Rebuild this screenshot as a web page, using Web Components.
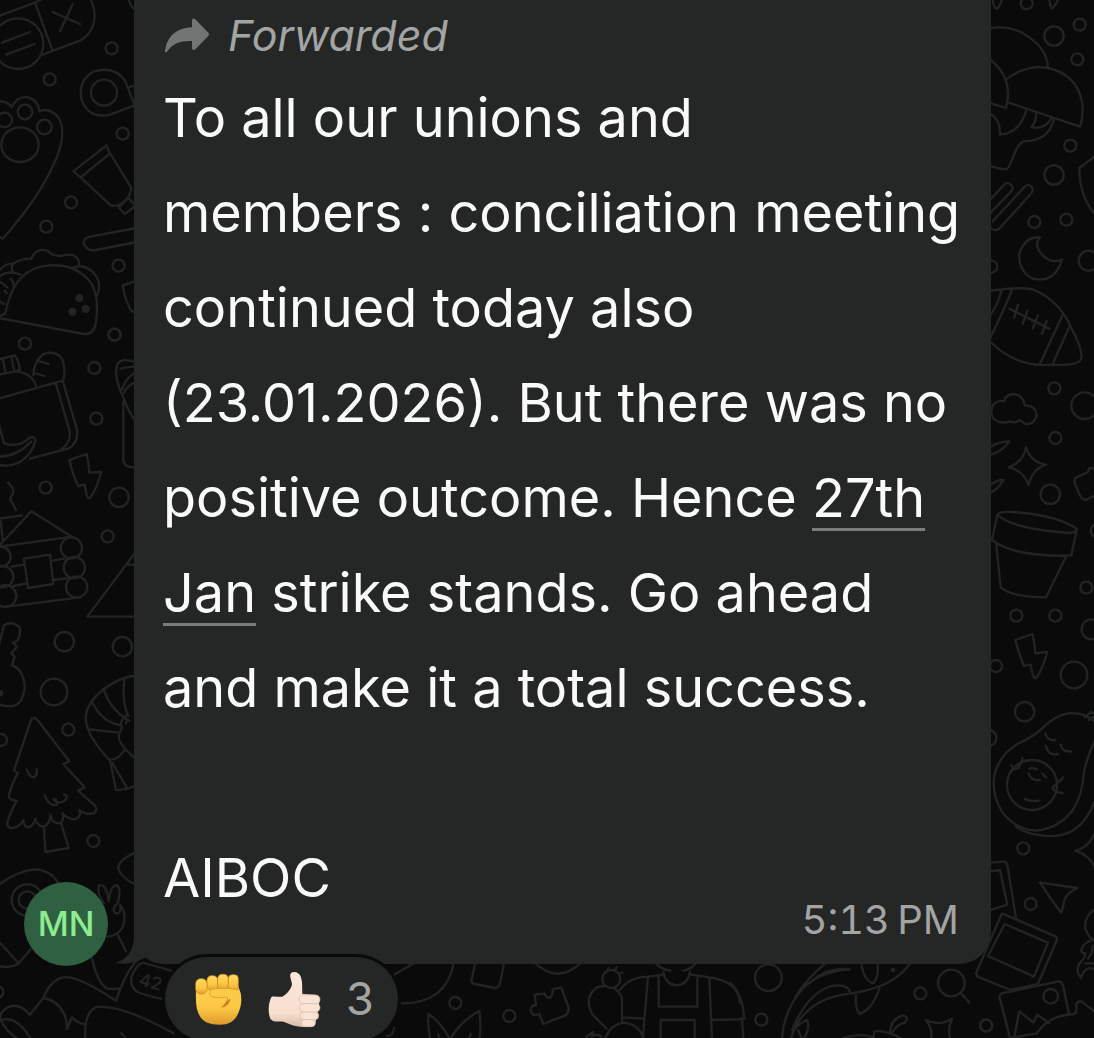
<!DOCTYPE html>
<html lang="en">
<head>
<meta charset="utf-8">
<meta name="viewport" content="width=device-width, initial-scale=1">
<title>Chat</title>
<style>
  body {
    margin: 0;
    background: #0a0a0a;
    color: #fafafa;
    font-family: Inter, "Liberation Sans", sans-serif;
    overflow: hidden;
  }
</style>
</head>
<body>
<chat-thread>
  <chat-message>
    <user-avatar slot="avatar">MN</user-avatar>
    <forwarded-label slot="label">Forwarded</forwarded-label>
    <message-text>To all our unions and<br>members : conciliation meeting<br>continued today also<br>(23.01.2026). But there was no<br>positive outcome. Hence <a href="#date">27th<br>Jan</a> strike stands. Go ahead<br>and make it a total success.<br><br>AIBOC</message-text>
    <time slot="time" datetime="17:13">5:13&#8201;PM</time>
    <reaction-pill slot="reactions" count="3"></reaction-pill>
  </chat-message>
</chat-thread>

<script>
class DoodleWallpaper extends HTMLElement {
  constructor() {
    super();
    this.attachShadow({mode: 'open'});
    this.render();
  }

  // each nested svg is one patch of the pattern, drawn at three units per pixel
  render() {
    this.shadowRoot.innerHTML = `
      <style>
        :host {
          display: block;
          overflow: hidden;
        }
        svg {
          display: block;
          overflow: visible;
          fill: none;
          stroke: #222323;
          stroke-width: 7;
          stroke-linecap: round;
          stroke-linejoin: round;
        }
        .dot { fill: #222323; stroke: none; }
        .over { fill: #0a0a0a; }
        text { fill: #222323; stroke: none; font-size: 54px; font-weight: 600; }
      </style>
      <svg width="1094" height="1038" viewBox="0 0 1094 1038" aria-hidden="true">
        <svg x="0" y="0" width="140" height="350" viewBox="0 0 420 1050">
          <path d="M-10 50L105 8L130-5M105 8L157 150M128 164L240 122Q282 98 284 48Q283 18 270-6"/>
          <path d="M158 36L240 72M218 12L180 94"/>
          <circle class="over" cx="54" cy="131" r="76"/>
          <path d="M6 128L90 96M18 164L104 132"/>
          <path d="M386-4Q390 18 404 28"/>
          <circle cx="335" cy="145" r="18"/><circle cx="149" cy="238" r="18"/>
          <circle cx="368" cy="401" r="18"/><circle cx="213" cy="607" r="18"/>
          <circle cx="139" cy="680" r="18"/><circle cx="356" cy="797" r="18"/>
          <circle cx="343" cy="1004" r="18"/><circle cx="75" cy="1031" r="18"/>
          <circle cx="312" cy="278" r="39"/>
          <path d="M404 316L330 344Q270 358 246 304Q230 244 282 214Q345 196 376 244L404 316M384 262L404 256"/>
          <path d="M-6 304Q22 302 36 322Q50 288 84 292Q116 302 118 334Q150 320 176 354Q202 400 166 482Q120 590 8 716L-5 708"/>
          <circle cx="75" cy="336" r="22"/><circle cx="14" cy="360" r="22"/><circle cx="133" cy="381" r="22"/>
          <ellipse cx="60" cy="434" rx="56" ry="52"/>
          <path d="M220 514L319 436L328 456L394 564Q392 590 372 604Q354 622 332 616L242 532ZM242 532L328 462"/>
          <path d="M356 622L386 594L406 618L374 642Z"/>
          <path d="M410 684L270 710Q246 716 252 732Q262 754 288 750L410 726"/>
          <path d="M404 844L368 856Q372 888 388 922Q392 934 404 936"/>
          <path d="M-4 954L252 1002Q282 1006 288 966Q298 890 274 850Q232 792 150 796Q78 800 42 862Q24 898 16 940L-4 950"/>
          <path d="M-4 814Q14 790 38 792Q60 776 94 776Q108 742 142 752Q164 774 190 766Q232 756 238 792M38 792Q32 808 40 818M-4 832Q22 808 62 824"/>
          <path d="M216 804Q252 788 282 820Q308 850 290 888M0 846Q12 852 22 862M32 836Q44 850 40 858M14 872L20 880M-2 904L12 912"/>
          <circle class="dot" cx="238" cy="894" r="12"/><circle class="dot" cx="217" cy="935" r="12"/><circle class="dot" cx="257" cy="927" r="12"/>
        </svg>

        <svg x="0" y="340" width="140" height="350" viewBox="0 0 420 1050">
          <circle cx="283" cy="84" r="18"/><circle cx="289" cy="236" r="18"/>
          <circle cx="137" cy="443" r="18"/><circle cx="323" cy="589" r="18"/>
          <circle cx="357" cy="472" r="29"/><circle cx="193" cy="905" r="29"/><circle cx="367" cy="920" r="29"/>
          <circle cx="344" cy="-16" r="18"/>
          <path d="M-4 176L188 122L230 266Q238 308 204 326L90 356M168 132L208 270Q216 306 182 330"/>
          <path d="M108 138Q98 100 48 94L-4 104M-4 58L44 46Q54 54 60 88L48 94M8 56L16 96M34 50L42 90"/>
          <path d="M100 106Q100 66 130 42Q166 30 186 56Q198 86 190 120M118 64L146 72M106 100L134 108"/>
          <path d="M-4 250L12 310Q58 324 88 294Q104 284 106 302Q98 340 60 366Q30 382-4 374M-4 350Q50 350 94 304"/>
          <path d="M208 360L260 342Q266 370 268 398L304 396Q290 446 272 472Q266 480 260 466L254 434L234 438Q216 400 208 360Z"/>
          <path d="M404 66Q360 50 350 78Q342 116 370 172Q386 216 404 240M370 186V356Q370 384 404 382M404 80Q382 80 362 86M404 98Q376 116 366 148M404 128Q382 136 372 158"/>
          <path d="M24 428Q46 448 38 462Q24 478 38 490L48 510"/>
          <path d="M0 614L94 514L216 590L0 620M-4 536L66 526M2 544L8 600"/>
          <circle cx="214" cy="624" r="32"/><circle cx="223" cy="683" r="32"/><circle cx="230" cy="741" r="32"/>
          <circle cx="2" cy="650" r="30"/><circle cx="8" cy="710" r="32"/><circle cx="16" cy="768" r="33"/>
          <path d="M72 656L150 644L160 732L84 744ZM158 662L192 656M162 720L204 714M34 680L74 674M40 738L82 730M20 800L240 772"/>
          <path d="M404 640L262 830H404M382 674H404"/>
          <path d="M-4 920Q4 884 12 856Q32 842 58 860Q64 876 54 900L38 910Q56 916 46 926L34 940L44 950L36 976Q72 990 74 1040Q70 1090 40 1098Q20 1100-4 1094"/>
          <circle cx="162" cy="1056" r="40"/>
        </svg>

        <svg x="0" y="680" width="170" height="358" viewBox="0 0 510 1074">
          <circle class="dot" cx="0" cy="40" r="10"/>
          <circle cx="205" cy="149" r="18"/><circle cx="3" cy="180" r="18"/><circle cx="280" cy="483" r="18"/><circle cx="-8" cy="936" r="18"/>
          <path d="M94 118Q102 108 114 122L208 244L190 252L254 322L234 332L284 376Q298 398 272 402Q246 400 238 390Q246 412 224 418Q200 416 188 400Q194 430 172 430Q152 424 152 404Q150 438 126 440Q108 432 106 416Q98 444 82 442Q70 434 70 420Q56 446 32 444Q16 440 26 414Q36 388 50 362Q30 362 26 350Q34 314 54 278Q40 276 44 264Z"/>
          <path d="M80 268Q88 292 102 292Q114 284 110 266M134 346Q146 378 170 376Q172 352 160 358Q174 374 194 362Q208 348 192 344"/>
          <path d="M132 442L136 516L206 504L184 432"/>
          <path d="M404-12Q350-8 292 44Q252 86 258 124Q264 170 326 238Q350 244 376 208Q350 178 358 160Q370 140 362 134Q366 108 386 106"/>
          <path d="M278 70Q308 128 362 136M310 26Q332 92 388 122M374-6Q364 58 384 106M270 148L356 158M330 240L348 330Q380 330 404 318M338 250L380 322M376 208L404 234M370 112Q384 114 378 130"/>
          <path d="M404 518Q358 540 354 562Q362 594 404 612"/>
          <path d="M-4 614Q54 572 104 568Q152 570 174 608M-4 784L56 850L92 808M56 850Q34 866-4 858"/>
          <circle cx="82" cy="660" r="47"/><circle cx="82" cy="660" r="26"/>
          <path d="M312 670Q288 636 298 616Q320 610 326 664Q332 614 350 616Q366 624 352 672Q336 680 344 698Q366 708 360 674Q382 700 368 742Q350 770 320 770M352 762L378 814M276 834Q290 902 318 924Q334 930 362 924M404 848Q374 884 348 962Q230 884 188 892Q150 902 130 954L90 1004Q54 964 20 984Q-4 1000 2 1020Q22 1060 60 1080M132 954Q172 962 192 1000Q202 1020 200 1048L216 1012Q230 1028 250 1032M4 1020Q50 1006 92 1076M256 1080Q250 996 292 980Q370 976 520 1060"/>
          <path d="M520 874L428 848Q408 854 394 892Q390 920 412 936Q452 952 510 960"/>
          <text transform="translate(413 914) rotate(16)">42</text>
          <path d="M404 848Q424 826 452 830M364 1060L374 1070"/>
        </svg>

        <svg x="984" y="0" width="110" height="350" viewBox="0 0 330 1050">
          <circle cx="128" cy="10" r="18"/><circle cx="287" cy="74" r="18"/><circle cx="280" cy="178" r="18"/>
          <circle cx="259" cy="437" r="18"/><circle cx="151" cy="666" r="18"/><circle cx="247" cy="659" r="18"/><circle cx="22" cy="800" r="18"/>
          <circle cx="210" cy="108" r="29"/><circle cx="210" cy="525" r="29"/><circle cx="314" cy="782" r="30"/>
          <path d="M26 0Q30 28 40 26Q50 16 54-4M196-4Q198 26 206 24Q216 14 224-4"/>
          <path d="M20 84Q86 74 136 112Q190 150 192 204M66 238Q128 192 192 204Q276 222 294 304Q300 344 288 380L74 308M20 180Q74 222 72 290L66 324L20 310"/>
          <path d="M20 342Q50 360 48 404Q108 400 128 328M156 338Q158 364 142 382Q184 390 204 352M210 358Q194 424 120 424Q102 430 90 464Q74 508 66 508Q44 508 20 498"/>
          <path d="M20 598L62 552Q74 544 84 558Q88 568 80 576L20 638M26 664L122 560Q138 548 146 566Q148 574 138 584L48 684Q32 696 20 684"/>
          <path d="M168 712Q124 708 106 760Q102 812 146 836Q214 850 234 778Q204 792 178 768Q146 736 168 712Z"/>
          <path d="M334 468L286 504Q286 590 334 644"/>
          <path d="M20 872Q104 860 146 868Q226 900 262 984Q304 1062 288 1082Q276 1098 200 1094Q100 1104 20 1026M52 872Q42 912 20 944M84 870Q60 928 20 1012M236 944L168 1092M256 980L206 1092"/>
          <path d="M76 926L196 986M102 914L90 954M130 932L116 972M162 946L146 986M188 962L174 1002"/>
        </svg>

        <svg x="984" y="340" width="110" height="350" viewBox="0 0 330 1050">
          <circle cx="211" cy="145" r="18"/><circle cx="214" cy="294" r="18"/><circle cx="307" cy="743" r="18"/>
          <circle cx="97" cy="827" r="18"/><circle cx="214" cy="827" r="18"/><circle cx="36" cy="978" r="18"/>
          <circle cx="199" cy="463" r="29"/><circle cx="302" cy="197" r="40"/><circle cx="323" cy="868" r="30"/><circle cx="270" cy="1005" r="40"/><circle cx="340" cy="572" r="20"/>
          <path d="M60 184Q64 164 90 162Q118 166 122 196Q154 194 158 226Q150 256 124 252L106 240Q94 252 78 244Q48 254 28 236Q14 212 32 190Q44 180 60 184Z"/>
          <path d="M20 320Q46 304 76 304Q54 334 20 344M20 434Q40 420 58 420Q46 444 20 458"/>
          <path d="M126 322Q140 366 186 374Q144 388 134 436Q118 390 74 382Q118 366 126 322Z"/>
          <path d="M334 386L316 384L312 396L274 414Q268 430 278 442Q290 480 304 480L334 466"/>
          <path d="M40 524Q46 514 88 516Q220 526 278 566Q280 584 222 576Q78 562 40 524ZM40 524L24 600Q70 634 148 642Q204 650 262 646L278 570M36 608L50 742Q86 772 186 772L246 650"/>
          <path d="M94 900L146 882Q152 910 154 940L190 936Q176 986 158 1012Q152 1020 146 1004L140 974L120 978Q104 940 94 900Z"/>
        </svg>

        <svg x="984" y="680" width="110" height="358" viewBox="0 0 330 1074">
          <circle cx="122" cy="95" r="29"/><circle cx="12" cy="174" r="25"/><circle cx="118" cy="505" r="18"/><circle cx="140" cy="672" r="18"/><circle cx="6" cy="1036" r="18"/>
          <path d="M334 126Q300 96 252 100Q216 106 180 140Q150 170 100 192Q46 226 32 282Q20 340 56 398Q98 450 156 452Q222 446 264 394Q296 346 300 276Q312 220 334 180M96 440Q140 470 208 468Q294 466 334 360M302 112L320 96L334 102M314 120L330 110"/>
          <circle cx="144" cy="315" r="75"/>
          <path d="M184 160Q190 184 214 180M230 194Q236 218 262 214M186 198Q192 228 222 222M136 266Q146 260 158 268M134 280Q140 304 168 300M174 280L186 292M122 356Q140 366 166 362M82 256L90 268L104 264L116 234M238 292Q218 312 206 322Q204 334 236 340"/>
          <path d="M334 456Q312 506 274 512Q318 526 334 566"/>
          <path d="M168 608L280 624Q252 638 242 656Q238 682 232 698Q200 658 168 608Z"/>
          <path d="M20 548L62 544L70 554L96 716M20 574L48 570L70 674L20 690"/>
          <path class="over" d="M54 700L216 770Q222 776 216 786L162 912L80 930L-20 890L-24 880Z"/>
          <path d="M62 732L192 788L150 890L12 828Z"/>
          <path d="M78 1074L46 950Q50 938 64 938L224 904Q234 904 238 920L254 998M90 1074L106 994L148 1028L160 1004L196 1030M78 1074L158 1060Q194 1006 270 1002Q280 1000 276 974Q280 962 292 964L334 996"/>
          <circle cx="200" cy="949" r="22"/>
          <path d="M334 686Q300 708 304 746Q318 782 334 780M324 780Q296 790 292 810Q294 824 304 818Q302 838 290 846Q278 858 282 880L292 894Q296 870 316 864L334 868M312 836Q326 820 326 798M304 850H330"/>
        </svg>

        <svg x="380" y="940" width="360" height="98" viewBox="0 0 1080 294">
          <circle cx="226" cy="189" r="18"/><circle cx="388" cy="228" r="18"/>
          <path d="M40 106L104 68M222 64Q202 192 60 190M286 68L274 122Q276 130 284 132L346 144Q358 142 360 130L372 70M464 68Q532 134 604 68"/>
          <path d="M150 294Q142 250 146 222Q190 254 210 300Q234 250 298 212Q304 256 298 300M174 282L178 294M272 282L268 294M20 288Q40 290 42 264"/>
          <path d="M464 164L494 160Q500 178 512 172Q520 158 518 148L544 142L566 204Q566 220 556 226L490 252L478 222Q454 232 452 208Q456 194 468 196Z"/>
          <path d="M680 266L636 222Q610 170 652 142Q700 124 726 172V246M674 300Q690 252 734 248Q780 254 792 300"/>
          <circle class="over" cx="694" cy="117" r="27"/>
          <path d="M682 92L686 84M704 90L710 82M718 100L728 98M620 290L640 276L636 290Q650 278 664 290"/>
          <path d="M720 150Q746 112 804 110L852 104M934 104L988 112Q1076 124 1080 190M804 110L788 300M988 112L996 300M728 232L790 236M996 240L1080 238M836 108V200H952V108M842 300V240H944V300M826 68Q842 88 872 92M948 68Q938 86 910 92M850 96Q856 134 892 136Q924 132 930 96"/>
        </svg>

        <svg x="730" y="880" width="364" height="158" viewBox="0 0 1092 474">
          <circle cx="115" cy="293" r="40"/><circle cx="94" cy="419" r="18"/><circle cx="571" cy="340" r="18"/><circle cx="769" cy="437" r="18"/><circle cx="664" cy="309" r="40"/>
          <circle class="dot" cx="489" cy="270" r="7"/>
          <path d="M0 308Q40 344 42 416M30 416H44M36 418L40 474M692 338L718 368"/>
          <path d="M156 474Q162 400 204 344Q250 276 360 268Q296 260 250 300M286 250Q228 298 196 350M184 474Q218 356 364 340Q492 322 540 250M186 450Q232 340 304 318Q356 310 362 340M394 250Q400 300 430 310Q448 288 442 250M378 346Q374 388 390 402Q428 386 448 326M184 474Q190 436 232 420Q240 450 222 474M204 450L214 474"/>
          <path d="M340 474Q390 458 430 472L434 454Q466 450 512 474M480 458Q480 420 516 406Q540 410 524 428Q500 434 486 458M588 420Q626 440 666 416Q652 446 660 474M588 420Q608 446 604 474"/>
        </svg>
      </svg>
    `;
  }
}

class ChatThread extends HTMLElement {
  constructor() {
    super();
    this.attachShadow({mode: 'open'});
    this.render();
  }

  render() {
    this.shadowRoot.innerHTML = `
      <style>
        :host {
          display: grid;
          height: 100vh;
          overflow: hidden;
        }
        doodle-wallpaper, main {
          grid-area: 1 / 1;
          min-width: 0;
          min-height: 0;
        }
        main { position: relative; }
      </style>
      <doodle-wallpaper></doodle-wallpaper>
      <main><slot></slot></main>
    `;
  }
}

class ChatMessage extends HTMLElement {
  constructor() {
    super();
    this.attachShadow({mode: 'open'});
    this.render();
  }

  render() {
    this.shadowRoot.innerHTML = `
      <style>
        :host {
          display: grid;
          grid-template-columns: 110px minmax(0, 1fr);
          column-gap: 24px;
          padding-right: 103px;
        }
        .avatar {
          align-self: end;
          justify-self: end;
          padding-right: 2px;
          height: 82px;
        }
        .bubble {
          position: relative;
          display: flex;
          flex-direction: column;
          padding: 10px 32px 20px 29px;
          background: #252726;
          border-radius: 0 0 32px 32px;
        }
        .tail {
          position: absolute;
          left: -19px;
          bottom: 0;
          fill: #252726;
        }
        .time {
          align-self: flex-end;
          margin-top: -29px;
          color: #a3a4a4;
          font-size: 40px;
          line-height: 48px;
          font-variant-numeric: tabular-nums;
        }
        .reactions {
          grid-column: 2;
          position: relative;
          margin: -7px 0 0 31px;
        }
      </style>
      <div class="avatar"><slot name="avatar"></slot></div>
      <article class="bubble">
        <svg class="tail" width="50" height="40" viewBox="0 0 50 40" aria-hidden="true">
          <path d="M19 0V12C19 26 12 36 0 39C11 41 22 39 30 33C36 38 42 40 50 40V0Z"/>
        </svg>
        <slot name="label"></slot>
        <slot></slot>
        <div class="time"><slot name="time"></slot></div>
      </article>
      <div class="reactions"><slot name="reactions"></slot></div>
    `;
  }
}

class UserAvatar extends HTMLElement {
  constructor() {
    super();
    this.attachShadow({mode: 'open'});
    this.render();
  }

  render() {
    this.shadowRoot.innerHTML = `
      <style>
        :host {
          display: grid;
          place-items: center;
          width: 84px;
          height: 84px;
          border-radius: 50%;
          background: #2f6041;
          color: #8eeb90;
          font-size: 34px;
          font-weight: 500;
          line-height: 42px;
        }
      </style>
      <slot></slot>
    `;
  }
}

class ForwardedLabel extends HTMLElement {
  constructor() {
    super();
    this.attachShadow({mode: 'open'});
    this.render();
  }

  render() {
    this.shadowRoot.innerHTML = `
      <style>
        :host {
          display: flex;
          align-items: center;
          gap: 18px;
          box-sizing: border-box;
          height: 60px;
          padding: 0 0 10px 2px;
          color: #a3a4a4;
          font-size: 43px;
          line-height: 50px;
          font-style: italic;
        }
        svg { fill: #737474; }
      </style>
      <svg width="45" height="35" viewBox="0 0 135 105" aria-hidden="true">
        <path d="M2 103C-1 103 0 96 1 92C10 48 40 30 81 28V8C81 0 87 0 91 4L130 44Q134 49 130 54L92 93C88 98 81 97 81 90V69C46 68 24 76 7 100Q5 103 2 103Z"/>
      </svg>
      <span><slot></slot></span>
    `;
  }
}

class MessageText extends HTMLElement {
  constructor() {
    super();
    this.attachShadow({mode: 'open'});
    this.render();
  }

  render() {
    this.shadowRoot.innerHTML = `
      <style>
        :host {
          display: block;
          font-size: 54px;
          line-height: 95px;
          white-space: nowrap;
        }
        ::slotted(a) {
          color: inherit;
          text-decoration: underline 3px #7c7d7d;
          text-decoration-skip-ink: none;
          text-underline-offset: 11px;
        }
      </style>
      <slot></slot>
    `;
  }
}

class ReactionPill extends HTMLElement {
  constructor() {
    super();
    this.attachShadow({mode: 'open'});
    this.render();
  }

  render() {
    this.shadowRoot.innerHTML = `
      <style>
        :host { display: block; }
        button {
          display: flex;
          align-items: center;
          gap: 24px;
          height: 84px;
          padding: 0 24px 0 28px;
          border: none;
          border-radius: 42px;
          background: #252726;
          box-shadow: 0 0 0 3px #0a0a0a;
          color: #a3a4a4;
          font: inherit;
          font-size: 45px;
          line-height: 54px;
        }
      </style>
      <button type="button" aria-label="${this.getAttribute('count')} reactions">
        <svg width="50" height="54" viewBox="16 17 150 162" aria-hidden="true">
          <defs>
            <linearGradient id="gold" x1="0" y1="0" x2="0" y2="1">
              <stop offset="0" stop-color="#ffd24c"/>
              <stop offset=".6" stop-color="#fbc544"/>
              <stop offset="1" stop-color="#dd9a2a"/>
            </linearGradient>
            <linearGradient id="knuckle" x1="0" y1="0" x2="0" y2="1">
              <stop offset="0" stop-color="#ffd85c"/>
              <stop offset=".6" stop-color="#fcc844"/>
              <stop offset="1" stop-color="#e3a02c"/>
            </linearGradient>
          </defs>
          <path fill="url(#gold)" d="M25 66C24 100 24 128 36 148C46 168 66 175 96 175C126 175 142 164 152 140C162 118 164 94 156 72L150 56H40Z"/>
          <g fill="url(#knuckle)" stroke="#c88620" stroke-width="2">
            <rect x="58" y="28" width="32" height="44" rx="13"/>
            <rect x="90" y="24" width="32" height="46" rx="13"/>
            <rect x="122" y="25" width="30" height="48" rx="12"/>
            <rect x="24" y="37" width="34" height="46" rx="15"/>
          </g>
          <path fill="#fcc946" d="M120 76Q130 66 156 72Q164 96 154 126L118 118Z"/>
          <path fill="#c78021" d="M92 90C106 88 120 84 118 98C116 110 108 116 100 124C126 120 134 96 124 82L112 76Z"/>
          <path fill="#fdcb48" stroke="#d29126" stroke-width="2" d="M156 73C134 64 100 66 76 68C62 71 64 88 76 92C90 95 102 94 113 92C121 91 122 99 114 108"/>
        </svg>
        <svg width="55" height="57" viewBox="14 15 165 171" aria-hidden="true">
          <defs>
            <linearGradient id="pale" x1="0" y1="0" x2="0" y2="1">
              <stop offset="0" stop-color="#fbe7da"/>
              <stop offset=".75" stop-color="#f7dfd0"/>
              <stop offset="1" stop-color="#dcb9a6"/>
            </linearGradient>
          </defs>
          <path fill="url(#pale)" d="M28 92C40 90 50 94 60 92C74 84 88 68 89 54C87 42 80 28 86 21C96 14 112 20 116 34C121 50 119 68 120 84L158 86Q172 90 172 104L160 168Q156 182 142 183C110 185 88 178 66 168C52 164 34 172 24 158C16 138 18 108 28 92Z"/>
          <g fill="#f9e3d5" stroke="#d9b5a3" stroke-width="2">
            <rect x="117" y="160" width="42" height="22" rx="11"/>
            <rect x="113" y="137" width="56" height="24" rx="12"/>
            <rect x="111" y="112" width="62" height="26" rx="13"/>
            <rect x="110" y="87" width="63" height="26" rx="13"/>
          </g>
        </svg>
        <span>${this.getAttribute('count')}</span>
      </button>
    `;
  }
}

customElements.define('doodle-wallpaper', DoodleWallpaper);
customElements.define('user-avatar', UserAvatar);
customElements.define('forwarded-label', ForwardedLabel);
customElements.define('message-text', MessageText);
customElements.define('reaction-pill', ReactionPill);
customElements.define('chat-message', ChatMessage);
customElements.define('chat-thread', ChatThread);
</script>
</body>
</html>
